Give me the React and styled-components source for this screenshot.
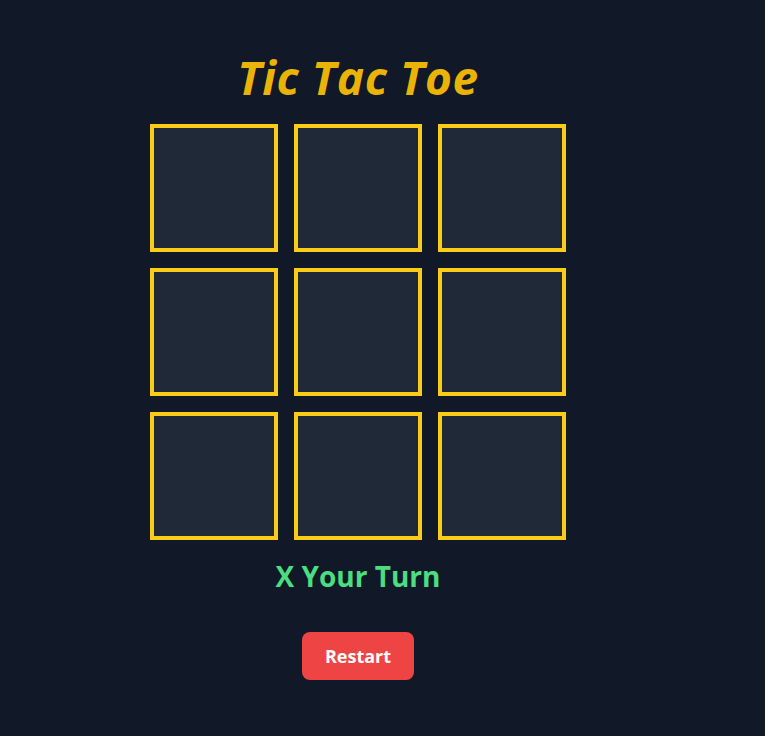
import React, { useState } from 'react';
import styled, { createGlobalStyle } from 'styled-components';

const GlobalStyle = createGlobalStyle`
  body {
    margin: 0;
    background-color: #111827;
    font-family: "Open Sans", "Noto Sans", sans-serif;
  }
`

const App = () => {
  const [board, setBoard] = useState(Array(9).fill(null));
  const [xTurn, setXTurn] = useState(true);

  const play = (i) => {
    if (board[i]) return;
    const next = board.slice();
    next[i] = xTurn ? 'X' : 'O';
    setBoard(next);
    setXTurn(!xTurn);
  }

  const restart = () => {
    setBoard(Array(9).fill(null));
    setXTurn(true);
  }

  return (
    <Page>
      <GlobalStyle />
      <Title>Tic Tac Toe</Title>
      <Board>
        {board.map((v, i) => (
          <Cell key={i} onClick={() => play(i)}>{v}</Cell>
        ))}
      </Board>
      <Status>{xTurn ? 'X' : 'O'} Your Turn</Status>
      <RestartButton onClick={restart}>Restart</RestartButton>
    </Page>
  );
}

const Page = styled.div`
  width: 716px;
  min-height: 100vh;
  display: flex;
  flex-direction: column;
  align-items: center;
  padding-top: 49px;
  box-sizing: border-box;
`
const Title = styled.h1`
  margin: 0;
  font-size: 46px;
  line-height: 56px;
  font-weight: 700;
  font-style: italic;
  color: #eab308;
  letter-spacing: 0.6px;
`
const Board = styled.div`
  margin-top: 19px;
  display: grid;
  grid-template-columns: repeat(3, 128px);
  gap: 16px;
`
const Cell = styled.button`
  width: 128px;
  height: 128px;
  box-sizing: border-box;
  border: 4px solid #facc15;
  background-color: #1f2937;
  color: #facc15;
  font-size: 56px;
  font-weight: 700;
  font-family: inherit;
  cursor: pointer;
  padding: 0;
`
const Status = styled.div`
  margin-top: 18px;
  font-size: 28px;
  line-height: 36px;
  font-weight: 700;
  color: #4ade80;
`
const RestartButton = styled.button`
  margin-top: 38px;
  height: 48px;
  padding: 0 23px;
  border: none;
  border-radius: 8px;
  background-color: #ef4444;
  color: #ffffff;
  font-family: inherit;
  font-size: 18px;
  font-weight: 700;
  cursor: pointer;
`

export default App;
